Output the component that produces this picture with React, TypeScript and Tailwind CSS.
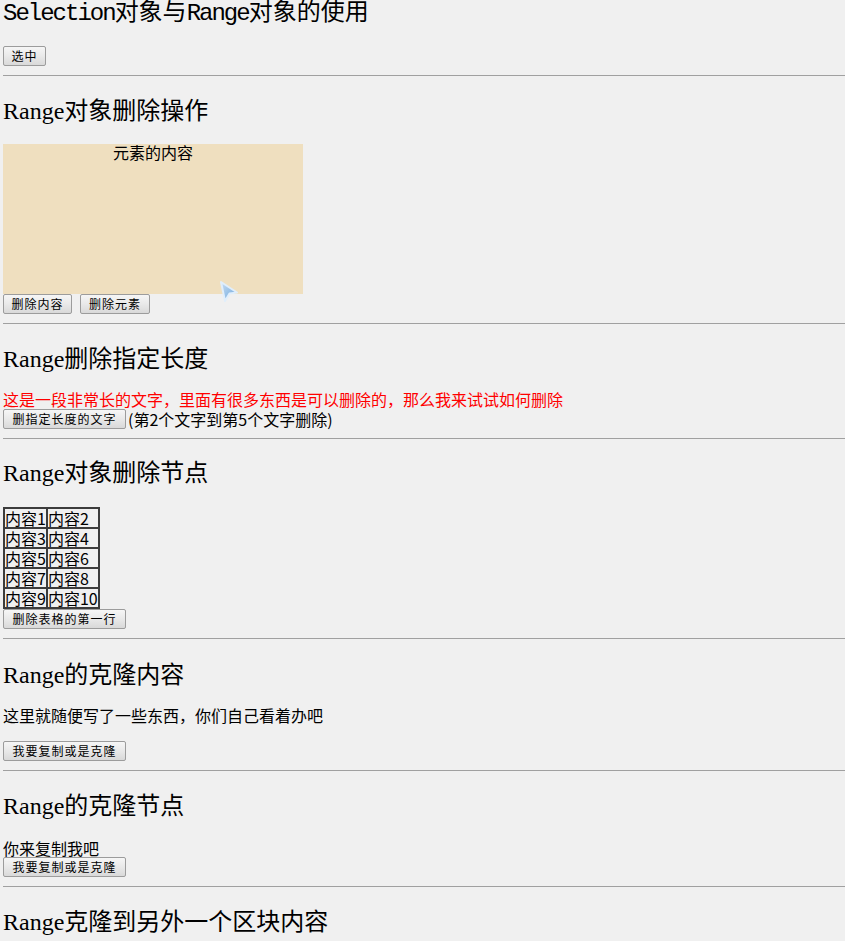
import React from "react";

// 标题、按钮等共用样式
const heading =
  "text-[24px] leading-[24px] font-normal text-black font-['Liberation_Serif','Noto_Sans_CJK_SC',serif]";
const btn =
  "h-[20px] flex items-center justify-center rounded-[2px] border border-[#9c9c9c] bg-gradient-to-b from-[#f6f6f6] via-[#e9e9e9] to-[#d9d9d9] text-[12px] leading-[12px] tracking-[1px] text-black font-['Noto_Sans_CJK_SC',sans-serif]";
const cell =
  "h-[20px] border border-[#3c3c3c] p-0 leading-[14px] align-middle whitespace-nowrap";

const Rule = () => <hr className="mt-[9px] h-px border-0 bg-[#a0a0a0]" />;

const Cursor = () => (
  <svg
    width="22"
    height="24"
    viewBox="0 0 22 24"
    className="absolute left-[215px] top-[136px]"
  >
    <defs>
      <linearGradient id="cur" x1="0" y1="0" x2="1" y2="1">
        <stop offset="0" stopColor="#c8def4" />
        <stop offset="1" stopColor="#6aa4da" />
      </linearGradient>
    </defs>
    <path
      d="M3 2 L19 12.5 L11.5 13.5 L7 21 Z"
      fill="url(#cur)"
      stroke="#e0eefb"
      strokeWidth="2"
      strokeLinejoin="round"
    />
  </svg>
);

const rows = [
  ["内容1", "内容2"],
  ["内容3", "内容4"],
  ["内容5", "内容6"],
  ["内容7", "内容8"],
  ["内容9", "内容10"],
];

export default function App() {
  return (
    <div className="min-h-screen bg-[#f0f0f0] pl-[3px] text-black text-[16px] leading-[16px] font-['Noto_Sans_CJK_SC',sans-serif]">
      <h1 className={`${heading} h-[24px]`}>
        <span className="font-['Liberation_Mono'] tracking-[-2px]">Selection</span>
        对象与
        <span className="font-['Liberation_Mono'] tracking-[-2px]">Range</span>
        对象的使用
      </h1>
      <button className={`${btn} mt-[22px] w-[43px]`}>选中</button>
      <Rule />

      <h2 className={`${heading} mt-[23px]`}>Range对象删除操作</h2>
      <div className="relative mt-[21px]">
        <div className="h-[150px] w-[300px] bg-[#efdfbf] text-center">
          元素的内容
        </div>
        <div className="flex gap-[8px]">
          <button className={`${btn} w-[69px]`}>删除内容</button>
          <button className={`${btn} w-[70px]`}>删除元素</button>
        </div>
        <Cursor />
      </div>
      <Rule />

      <h2 className={`${heading} mt-[23px]`}>Range删除指定长度</h2>
      <p className="mt-[20px] text-[#ff0000]">
        这是一段非常长的文字，里面有很多东西是可以删除的，那么我来试试如何删除
      </p>
      <div className="mt-[2px] flex items-center gap-[2px]">
        <button className={`${btn} w-[123px]`}>删指定长度的文字</button>
        <span>(第2个文字到第5个文字删除)</span>
      </div>
      <Rule />

      <h2 className={`${heading} mt-[22px]`}>Range对象删除节点</h2>
      <table className="mt-[22px] border-separate border-spacing-0 border border-[#3c3c3c]">
        <tbody>
          {rows.map((r) => (
            <tr key={r[0]}>
              <td className={cell}>{r[0]}</td>
              <td className={cell}>{r[1]}</td>
            </tr>
          ))}
        </tbody>
      </table>
      <button className={`${btn} w-[123px]`}>删除表格的第一行</button>
      <Rule />

      <h2 className={`${heading} mt-[24px]`}>Range的克隆内容</h2>
      <p className="mt-[20px]">这里就随便写了一些东西，你们自己看着办吧</p>
      <button className={`${btn} mt-[18px] w-[123px]`}>我要复制或是克隆</button>
      <Rule />

      <h2 className={`${heading} mt-[23px]`}>Range的克隆节点</h2>
      <div className="mt-[22px]">你来复制我吧</div>
      <button className={`${btn} mt-[1px] w-[123px]`}>我要复制或是克隆</button>
      <Rule />

      <h2 className={`${heading} mt-[23px]`}>Range克隆到另外一个区块内容</h2>
    </div>
  );
}
